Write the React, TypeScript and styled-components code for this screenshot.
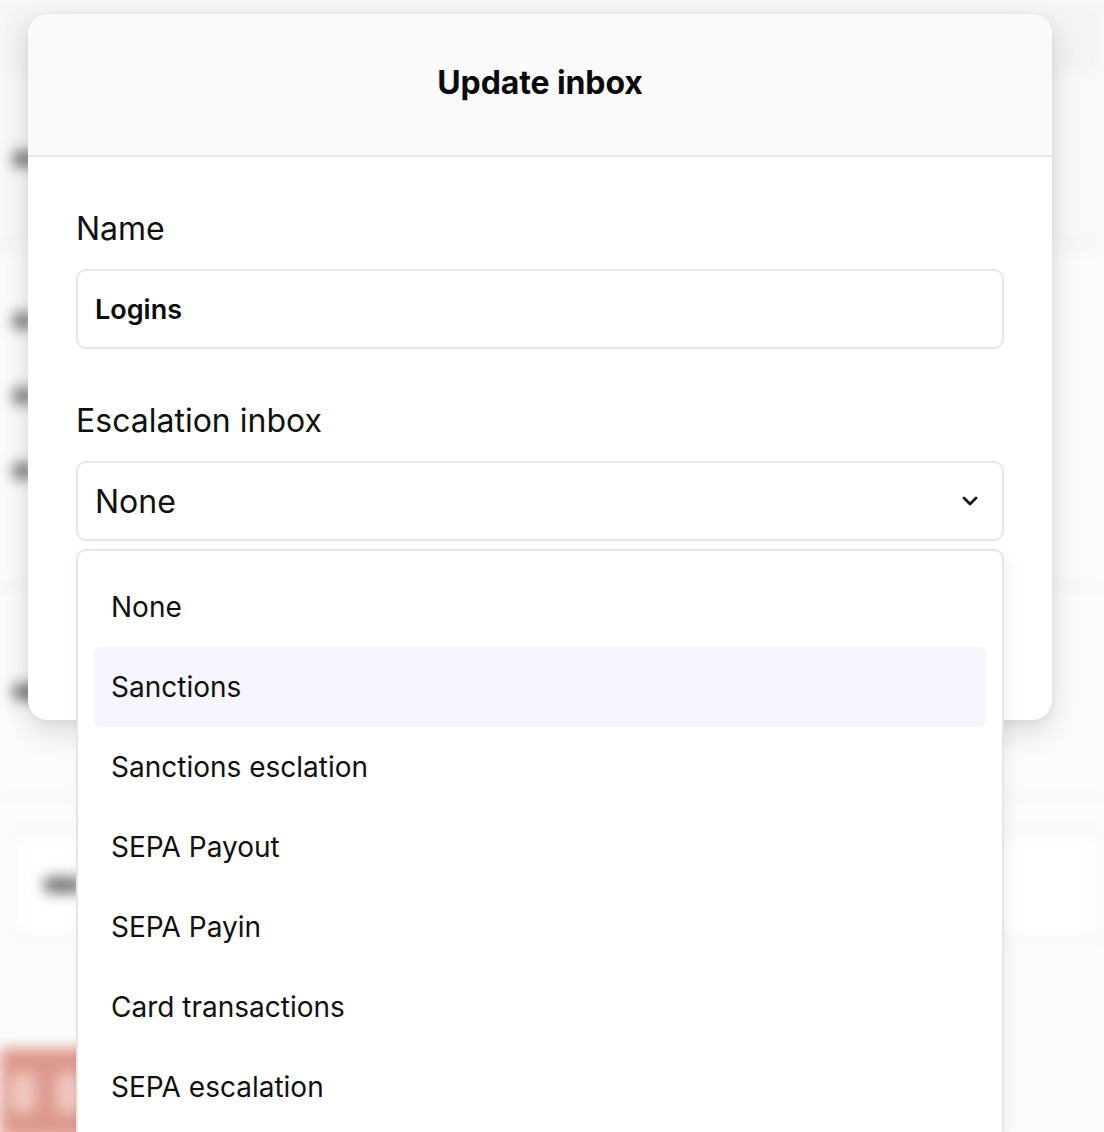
import React from "react";
import styled, { createGlobalStyle } from "styled-components";
import { ChevronDown } from "lucide-react";

const Global = createGlobalStyle`
  html, body { margin: 0; padding: 0; }
  body {
    width: 1104px;
    height: 1132px;
    overflow: hidden;
    font-family: Inter, "Noto Sans", sans-serif;
    color: #111;
    background: #fbfbfc;
  }
  #root { position: relative; width: 1104px; height: 1132px; overflow: hidden; }
`;

/* ---------- blurred page behind the dialog ---------- */
const Backdrop = styled.div`
  position: absolute;
  inset: 0;
  display: flex;
  flex-direction: column;
  filter: blur(7px);
  background: #fcfcfd;
`;

const BandTop = styled.div`
  height: 72px;
  flex-shrink: 0;
  background: #f4f4f6;
`;

const BgRow = styled.div<{ $h: number; $line?: boolean; $bg?: string }>`
  height: ${(p) => p.$h}px;
  flex-shrink: 0;
  display: flex;
  align-items: center;
  padding-left: 12px;
  background: ${(p) => p.$bg || "transparent"};
  border-bottom: ${(p) => (p.$line ? "3px solid #ececef" : "none")};
  box-sizing: border-box;
`;

const Blob = styled.div<{ $w: number }>`
  width: ${(p) => p.$w}px;
  height: 16px;
  border-radius: 8px;
  background: #707070;
`;

const BgCard = styled.div`
  margin: 32px 0 0 10px;
  height: 110px;
  flex-shrink: 0;
  box-sizing: border-box;
  border: 3px solid #ececef;
  border-radius: 14px;
  display: flex;
  align-items: center;
  padding-left: 30px;
  background: #fff;
`;

const RedButton = styled.div`
  margin-top: 108px;
  height: 90px;
  width: 90px;
  flex-shrink: 0;
  background: #dd988c;
  display: flex;
  align-items: center;
  gap: 20px;
  padding-left: 10px;
`;

const RedDot = styled.div`
  width: 26px;
  height: 40px;
  border-radius: 8px;
  background: #efc7c0;
`;

/* ---------- dialog ---------- */
const Dialog = styled.div`
  position: absolute;
  left: 28px;
  top: 14px;
  width: 1024px;
  background: #fff;
  border-radius: 20px;
  box-shadow: 0 12px 32px rgba(0, 0, 0, 0.14), 0 2px 8px rgba(0, 0, 0, 0.05);
  overflow: hidden;
`;

const Header = styled.div`
  height: 143px;
  background: #fafafa;
  border-bottom: 2px solid #e6e6e6;
  display: flex;
  align-items: center;
  justify-content: center;
  padding-bottom: 4px;
  box-sizing: border-box;
`;

const Title = styled.h2`
  margin: 0;
  font-size: 32px;
  line-height: 40px;
  font-weight: 700;
  letter-spacing: -0.1px;
  color: #0a0a0a;
`;

const Body = styled.div`
  padding: 52px 48px 179px;
  display: flex;
  flex-direction: column;
`;

const Label = styled.label<{ $top?: number }>`
  display: block;
  font-size: 32px;
  line-height: 40px;
  color: #111;
  margin-top: ${(p) => p.$top || 0}px;
  margin-bottom: 20px;
`;

const Field = styled.div`
  height: 80px;
  box-sizing: border-box;
  border: 2px solid #e6e6e6;
  border-radius: 10px;
  display: flex;
  align-items: center;
  justify-content: space-between;
  padding: 0 20px 0 17px;
  background: #fff;
`;

const InputValue = styled.span`
  font-size: 27px;
  font-weight: 600;
  color: #0a0a0a;
`;

const SelectValue = styled.span`
  font-size: 32px;
  color: #111;
`;

/* ---------- dropdown popover ---------- */
const Menu = styled.ul`
  position: absolute;
  left: 76px;
  top: 549px;
  width: 928px;
  min-height: 640px;
  box-sizing: border-box;
  margin: 0;
  padding: 16px;
  list-style: none;
  background: #fff;
  border: 2px solid #e6e6e6;
  border-radius: 10px;
  box-shadow: 4px 6px 14px rgba(0, 0, 0, 0.06);
`;

const Option = styled.li<{ $active?: boolean }>`
  height: 80px;
  display: flex;
  align-items: center;
  padding-left: 17px;
  font-size: 28px;
  color: #111;
  border-radius: 6px;
  background: ${(p) => (p.$active ? "#f6f5fe" : "transparent")};
`;

const options = [
  "None",
  "Sanctions",
  "Sanctions esclation",
  "SEPA Payout",
  "SEPA Payin",
  "Card transactions",
  "SEPA escalation",
];

export default function App() {
  return (
    <>
      <Global />
      <Backdrop>
        <BandTop />
        <BgRow $h={176} $line $bg="#f9f9fa">
          <Blob $w={24} />
        </BgRow>
        <BgRow $h={35} />
        <BgRow $h={75}>
          <Blob $w={22} />
        </BgRow>
        <BgRow $h={75}>
          <Blob $w={22} />
        </BgRow>
        <BgRow $h={75}>
          <Blob $w={22} />
        </BgRow>
        <BgRow $h={80} $line />
        <BgRow $h={210} $line>
          <Blob $w={30} />
        </BgRow>
        <BgCard>
          <Blob $w={40} />
        </BgCard>
        <RedButton>
          <RedDot />
          <RedDot />
        </RedButton>
      </Backdrop>

      <Dialog>
        <Header>
          <Title>Update inbox</Title>
        </Header>
        <Body>
          <Label>Name</Label>
          <Field>
            <InputValue>Logins</InputValue>
          </Field>
          <Label $top={52}>Escalation inbox</Label>
          <Field>
            <SelectValue>None</SelectValue>
            <ChevronDown size={24} strokeWidth={2.8} color="#111" />
          </Field>
        </Body>
      </Dialog>

      <Menu>
        {options.map((o) => (
          <Option key={o} $active={o === "Sanctions"}>
            {o}
          </Option>
        ))}
      </Menu>
    </>
  );
}
